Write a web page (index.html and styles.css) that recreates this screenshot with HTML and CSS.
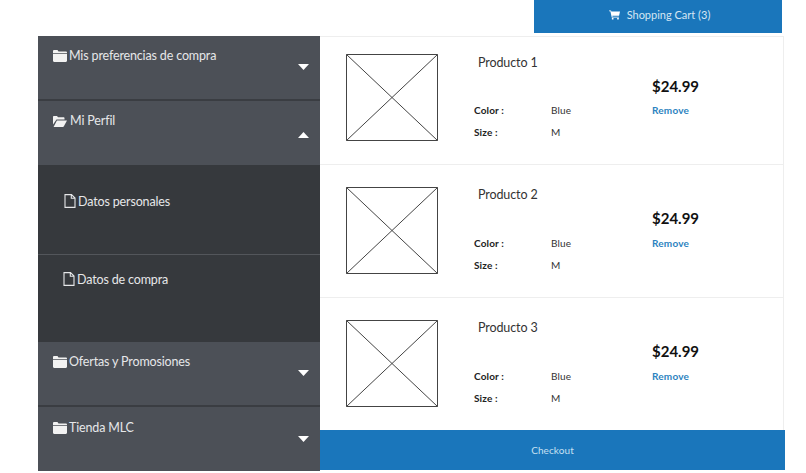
FILE: index.html
```html
<!DOCTYPE html>
<html lang="es">
<head>
<meta charset="utf-8">
<title>Shopping Cart</title>
<link rel="stylesheet" href="styles.css">
</head>
<body>
<svg class="defs" width="0" height="0" aria-hidden="true">
  <symbol id="folder" viewBox="0 0 14 12"><path d="M0 1.2C0 .5.5 0 1.2 0h3.3l1 1.4h7.3c.7 0 1.2.5 1.2 1.2V3H0zM0 3.8h14v7c0 .7-.5 1.2-1.2 1.2H1.2C.5 12 0 11.500 0 10.800z" fill="currentColor"/></symbol>
  <symbol id="folder-open" viewBox="0 0 14 11"><path d="M0 1C0 .4.400 0 1 0h3l1 1.300h5.500c.6 0 1 .4 1 1V3.600H3.500L0 8.500zM3.900 4.500H14l-3.100 5.700c-.2.4-.6.8-1.100.8H.6z" fill="currentColor"/></symbol>
  <symbol id="file" viewBox="0 0 12 14"><path d="M1 .6h6.500L11 4v9.400H1zM7.300.6V4.200H11" fill="none" stroke="currentColor" stroke-width="1.100"/></symbol>
  <symbol id="caret-down" viewBox="0 0 11 6"><path d="M0 0h11L5.500 6z" fill="currentColor"/></symbol>
  <symbol id="caret-up" viewBox="0 0 11 6"><path d="M0 6h11L5.500 0z" fill="currentColor"/></symbol>
  <symbol id="cart" viewBox="0 0 12 10"><path d="M0 0h2.200l.4 1.200H12l-1 4.600H3.600l.2 1h7v1H3L1.500 1H0z" fill="currentColor"/><circle cx="4" cy="9" r="1" fill="currentColor"/><circle cx="9.800" cy="9" r="1" fill="currentColor"/></symbol>
  <symbol id="placeholder" viewBox="0 0 92 87" preserveAspectRatio="none"><path d="M.5.500h91v86H.500zM.500.500l91 86M91.500.500l-91 86" fill="none" stroke="#444" stroke-width="1"/></symbol>
</svg>

<header class="topbar">
  <a class="cart-btn"><svg class="cart-icon"><use href="#cart"/></svg>Shopping Cart (3)</a>
</header>

<div class="layout">
  <nav class="sidebar">
    <div class="menu-item">
      <span class="menu-label"><svg class="i-folder"><use href="#folder"/></svg>Mis preferencias de compra</span>
      <svg class="caret"><use href="#caret-down"/></svg>
    </div>
    <div class="menu-item open">
      <span class="menu-label"><svg class="i-folder-open"><use href="#folder-open"/></svg> Mi Perfil</span>
      <svg class="caret"><use href="#caret-up"/></svg>
    </div>
    <div class="submenu">
      <div class="sub-item"><svg class="i-file"><use href="#file"/></svg>Datos personales</div>
      <div class="sub-item"><svg class="i-file"><use href="#file"/></svg>Datos de compra</div>
    </div>
    <div class="menu-item">
      <span class="menu-label"><svg class="i-folder"><use href="#folder"/></svg>Ofertas y Promosiones</span>
      <svg class="caret"><use href="#caret-down"/></svg>
    </div>
    <div class="menu-item last">
      <span class="menu-label"><svg class="i-folder"><use href="#folder"/></svg>Tienda MLC</span>
      <svg class="caret"><use href="#caret-down"/></svg>
    </div>
  </nav>

  <main class="cart">
    <article class="product">
      <svg class="thumb"><use href="#placeholder"/></svg>
      <div class="info">
        <h2 class="name">Producto 1</h2>
        <dl class="specs"><dt>Color :</dt><dd>Blue</dd><dt>Size :</dt><dd>M</dd></dl>
      </div>
      <div class="buy"><div class="price">$24.99</div><a class="remove">Remove</a></div>
    </article>
    <article class="product">
      <svg class="thumb"><use href="#placeholder"/></svg>
      <div class="info">
        <h2 class="name">Producto 2</h2>
        <dl class="specs"><dt>Color :</dt><dd>Blue</dd><dt>Size :</dt><dd>M</dd></dl>
      </div>
      <div class="buy"><div class="price">$24.99</div><a class="remove">Remove</a></div>
    </article>
    <article class="product">
      <svg class="thumb"><use href="#placeholder"/></svg>
      <div class="info">
        <h2 class="name">Producto 3</h2>
        <dl class="specs"><dt>Color :</dt><dd>Blue</dd><dt>Size :</dt><dd>M</dd></dl>
      </div>
      <div class="buy"><div class="price">$24.99</div><a class="remove">Remove</a></div>
    </article>
    <a class="checkout">Checkout</a>
  </main>
</div>
</body>
</html>
```
FILE: styles.css
```css
* { box-sizing: border-box; }
html, body { margin: 0; padding: 0; background: #fff; }
body { font-family: "Lato", "Noto Sans", sans-serif; width: 806px; height: 473px; overflow: hidden; }
.defs { display: block; height: 0; }

.topbar { height: 36px; display: flex; justify-content: flex-end; padding-right: 24px; }
.cart-btn { width: 248px; height: 33px; background: #1a76bb; color: #d5e6f3; display: flex; align-items: center; justify-content: center; font-size: 11px; padding-bottom: 4px; padding-left: 3px; }
.cart-icon { width: 11px; height: 10px; margin-right: 7px; color: #fff; }

.layout { display: flex; margin-left: 38px; }

.sidebar { width: 282px; height: 435px; background: #4c5057; color: #e6e7e9; flex: none; }
.menu-item { height: 65px; position: relative; padding: 11px 0 0 15px; border-bottom: 2px solid #3a3d42; }
.menu-item.open { height: 64px; border-bottom: 0; }
.menu-item.last { border-bottom: 0; height: 64px; padding-top: 12px; }
.menu-label { display: flex; align-items: center; font-size: 12.500px; letter-spacing: -.15px; line-height: 18px; white-space: pre; }
.i-folder { width: 14px; height: 12px; margin-right: 2px; color: #f2f2f2; }
.i-folder-open { width: 14px; height: 11px; color: #f2f2f2; }
.caret { position: absolute; right: 11px; top: 28px; width: 11px; height: 6px; color: #fff; }
.open .caret { top: 31px; }
.last .caret { top: 29px; }

.submenu { height: 177px; background: #36393d; }
.sub-item { height: 90px; padding: 28px 0 0 26px; font-size: 12.500px; letter-spacing: -.15px; line-height: 18px; display: flex; align-items: flex-start; border-bottom: 1px solid #53565b; }
.sub-item:last-child { border-bottom: 0; height: 87px; padding: 16px 0 0 25px; }
.i-file { width: 12px; height: 14px; margin: 1px 2px 0 0; color: #e6e7e9; }

.cart { width: 465px; height: 434px; display: flex; flex-direction: column; }
.product { display: flex; height: 133px; padding: 22px 0 0 26px; border-top: 1px solid #eee; border-right: 1px solid #eee; width: 464px; }
.product:first-child { height: 128px; padding-top: 17px; }
.thumb { width: 92px; height: 87px; flex: none; }
.info { width: 178px; margin-left: 36px; }
.name { margin: 0 0 0 4px; font-size: 12.500px; letter-spacing: -.1px; font-weight: 400; line-height: 16px; color: #333; }
.specs { margin: 33px 0 0; display: grid; grid-template-columns: 77px 1fr; row-gap: 8px; font-size: 10px; letter-spacing: .15px; line-height: 14px; color: #333; }
.specs dt { font-weight: 700; color: #222; }
.specs dd { margin: 0; }
.buy { margin-top: 22px; }
.price { font-size: 15px; font-weight: 700; line-height: 18px; color: #111; }
.remove { display: block; margin-top: 9px; font-size: 10px; letter-spacing: .2px; font-weight: 700; line-height: 14px; color: #2c83c0; }
.product:first-child .name { margin-top: 1px; }
.product:first-child .specs { margin-top: 32px; }
.product:first-child .buy { margin-top: 23px; }
.product:first-child .remove { margin-top: 8px; }
.checkout { height: 40px; width: 465px; background: #1a76bb; color: #c6e0f2; font-size: 10px; display: flex; align-items: center; justify-content: center; letter-spacing: .1px; }
```
